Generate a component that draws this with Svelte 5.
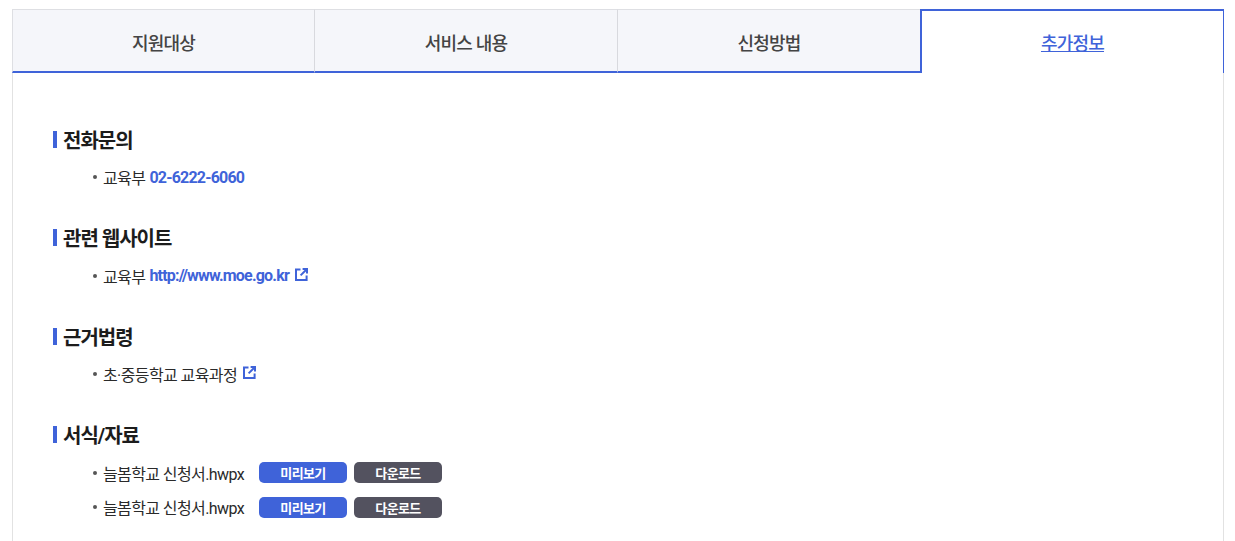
<script>
  const tabs = ['지원대상', '서비스 내용', '신청방법', '추가정보'];
  const files = ['늘봄학교 신청서.hwpx', '늘봄학교 신청서.hwpx'];
</script>

{#snippet extIcon()}
  <svg class="ext" width="13" height="13" viewBox="0 0 13 13" fill="none" stroke="#3f63d9" stroke-width="2">
    <path d="M5.5 1.4H1v10.6h10.6V7.5" />
    <path d="M5.6 7.4 11 2" />
    <path d="M7.6 1h4.4v4.4" />
  </svg>
{/snippet}

<div class="page">
  <ul class="tabs">
    {#each tabs as tab, i}
      <li class="tab" class:active={i === tabs.length - 1}>{tab}</li>
    {/each}
  </ul>

  <div class="panel">
    <section>
      <h3>전화문의</h3>
      <ul class="items">
        <li>교육부 <a class="link" href="#tel">02-6222-6060</a></li>
      </ul>
    </section>

    <section>
      <h3>관련 웹사이트</h3>
      <ul class="items">
        <li>교육부 <a class="link" href="#moe">http://www.moe.go.kr</a>{@render extIcon()}</li>
      </ul>
    </section>

    <section>
      <h3>근거법령</h3>
      <ul class="items">
        <li>초·중등학교 교육과정{@render extIcon()}</li>
      </ul>
    </section>

    <section>
      <h3>서식/자료</h3>
      <ul class="items files">
        {#each files as file}
          <li>
            <span class="fname">{file}</span>
            <span class="btn blue">미리보기</span>
            <span class="btn dark">다운로드</span>
          </li>
        {/each}
      </ul>
    </section>
  </div>
</div>

<style>
  :global(body) {
    margin: 0;
    background: #fff;
    overflow: hidden;
  }

  .page {
    width: 1212px;
    height: 541px;
    margin-left: 12px;
    padding-top: 9px;
    font-family: Roboto, "Noto Sans CJK KR", sans-serif;
    overflow: hidden;
  }

  .tabs {
    display: grid;
    grid-template-columns: repeat(4, 1fr);
    list-style: none;
    margin: 0;
    padding: 0;
    height: 64px;
    box-sizing: border-box;
  }

  .tab {
    display: flex;
    align-items: center;
    justify-content: center;
    box-sizing: border-box;
    padding-top: 2px;
    background: #f5f6fa;
    border-top: 1px solid #dedfe3;
    border-right: 1px solid #d8d9de;
    border-bottom: 2px solid #3f63d9;
    color: #444;
    font-size: 18px;
    font-weight: 500;
    letter-spacing: -0.8px;
  }

  .tab:first-child {
    border-left: 1px solid #dedfe3;
  }

  .tab.active {
    margin-left: -1px;
    background: #fff;
    border: 2px solid #3f63d9;
    border-bottom: 0;
    border-right-width: 1px;
    color: #3f63d9;
    text-decoration: underline;
    padding-top: 0;
  }

  .panel {
    border: 1px solid #e2e2e2;
    border-top: 0;
    padding: 48px 40px 0;
    height: 480px;
    box-sizing: border-box;
  }

  section {
    margin-bottom: 25.6px;
  }

  h3 {
    margin: 0;
    height: 36px;
    display: flex;
    align-items: center;
    font-size: 20px;
    font-weight: 700;
    color: #1c1c1c;
    letter-spacing: -1px;
  }

  h3::before {
    content: "";
    width: 4px;
    height: 17px;
    margin-right: 6px;
    background: #3f63d9;
  }

  .items {
    list-style: none;
    margin: 3px 0 0;
    padding: 0 0 0 40px;
  }

  .items li {
    position: relative;
    display: flex;
    align-items: center;
    gap: 4px;
    height: 34px;
    padding-left: 10px;
    font-size: 16px;
    color: #2a2a2a;
    letter-spacing: -0.6px;
  }

  .files li {
    height: 34.4px;
  }

  .items li::before {
    content: "";
    position: absolute;
    left: 0;
    top: 15px;
    width: 4px;
    height: 4px;
    border-radius: 50%;
    background: #555;
  }

  .link {
    color: #3f63d9;
    font-weight: 700;
    letter-spacing: -0.8px;
    text-decoration: none;
  }

  .ext {
    margin: 0 0 3px 2px;
  }

  .fname {
    width: 152px;
    white-space: nowrap;
  }

  .btn {
    display: inline-flex;
    align-items: center;
    justify-content: center;
    width: 88px;
    height: 21px;
    margin-right: 3px;
    border-radius: 5px;
    color: #fff;
    font-size: 13px;
    font-weight: 700;
    letter-spacing: -0.6px;
  }

  .blue {
    background: #3f63d9;
  }

  .dark {
    background: #53525f;
  }
</style>
